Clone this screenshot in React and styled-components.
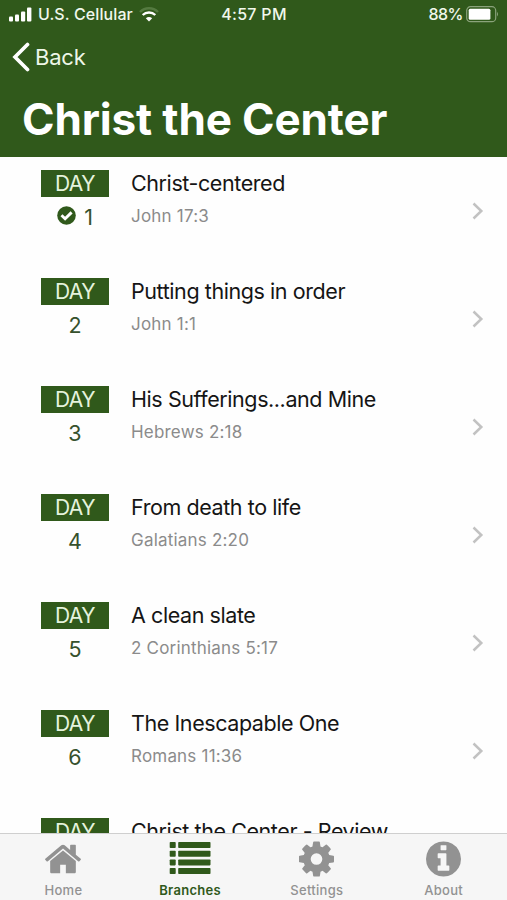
import React, { useState } from "react";
import styled, { createGlobalStyle } from "styled-components";

const GlobalStyle = createGlobalStyle`
  body {
    margin: 0;
    background: #fefefe;
    font-family: Inter, "Liberation Sans", sans-serif;
    font-feature-settings: "calt" 0;
  }
`;

const Screen = styled.div`
  display: flex;
  flex-direction: column;
  height: 100vh;
  overflow: hidden;
`;

// Green header with the status bar, back link and title
const Header = styled.header`
  flex: none;
  box-sizing: border-box;
  height: 157px;
  background-color: #30591b;
  color: #fff;
`;

const StatusBar = styled.div`
  display: grid;
  grid-template-columns: 1fr auto 1fr;
  align-items: center;
  height: 28px;
  padding: 0 8px 0 9px;
  font-size: 16px;
  font-weight: 500;
  letter-spacing: 0.3px;
  color: #f1f8ec;
`;

const StatusGroup = styled.div`
  display: flex;
  align-items: center;
  justify-content: ${(props) => (props.$end ? "flex-end" : "flex-start")};
  gap: ${(props) => (props.$end ? "3px" : "6px")};
  letter-spacing: ${(props) => (props.$end ? "-0.5px" : "0.1px")};
  white-space: nowrap;
`;

const BackButton = styled.button`
  display: flex;
  align-items: center;
  gap: 5px;
  height: 58px;
  padding: 0 0 0 12px;
  border: none;
  background: none;
  font-family: inherit;
  font-size: 22px;
  letter-spacing: -0.2px;
  color: #eef7e8;
`;

const Title = styled.h1`
  margin: 6px 0 0 22px;
  font-size: 44px;
  font-weight: 700;
  line-height: 54px;
  letter-spacing: -0.13px;
  white-space: nowrap;
`;

const List = styled.ul`
  flex: 1;
  min-height: 0;
  margin: 0;
  padding: 0;
  overflow: hidden;
  list-style: none;
`;

const Row = styled.li`
  display: flex;
  box-sizing: border-box;
  height: 107.95px;
  padding: 13.3px 23px 0 41px;
`;

const DayColumn = styled.div`
  width: 68px;
  margin-right: 22px;
  color: #30591b;
`;

const DayLabel = styled.div`
  height: 27px;
  background-color: #30591b;
  font-size: 21px;
  line-height: 27px;
  letter-spacing: -0.5px;
  text-align: center;
  color: #e5f3dd;
`;

const DayNumber = styled.div`
  display: flex;
  align-items: center;
  justify-content: center;
  gap: 8px;
  height: 28px;
  margin-top: 6px;
  font-size: 21.5px;
  color: #36512d;

  svg {
    margin-bottom: 3px;
  }
`;

const Details = styled.div`
  flex: 1;
`;

const Name = styled.div`
  font-size: 21.5px;
  line-height: 27px;
  letter-spacing: -0.42px;
  white-space: nowrap;
  color: #151515;
`;

const Passage = styled.div`
  margin-top: 8px;
  font-size: 17px;
  line-height: 22px;
  letter-spacing: 0.2px;
  color: #8b8b8b;
`;

const Chevron = styled.svg`
  margin-top: 32px;
`;

const TabBar = styled.nav`
  flex: none;
  display: grid;
  grid-template-columns: repeat(4, 1fr);
  box-sizing: border-box;
  height: 67px;
  border-top: 1px solid #cfcfcf;
  background-color: #f6f6f6;
`;

const Tab = styled.button`
  display: flex;
  flex-direction: column;
  align-items: center;
  padding: 7px 0 0;
  border: none;
  background: none;
  font-family: inherit;
  font-size: 13px;
  font-weight: ${(props) => (props.$active ? 600 : 500)};
  line-height: 16px;
  letter-spacing: 0.3px;
  color: ${(props) => (props.$active ? "#30591b" : "#929292")};

  svg {
    display: block;
    height: 36px;
    margin-bottom: 5px;
    fill: currentColor;
  }
`;

const days = [
  { name: "Christ-centered", passage: "John 17:3", done: true },
  { name: "Putting things in order", passage: "John 1:1" },
  { name: "His Sufferings...and Mine", passage: "Hebrews 2:18" },
  { name: "From death to life", passage: "Galatians 2:20" },
  { name: "A clean slate", passage: "2 Corinthians 5:17" },
  { name: "The Inescapable One", passage: "Romans 11:36" },
  { name: "Christ the Center - Review" },
];

const HomeIcon = () => (
  <svg width="36" viewBox="88 84 1616 1616">
    <path d="M1472 992v480q0 26-19 45t-45 19h-384v-384h-256v384h-384q-26 0-45-19t-19-45v-480q0-1 .5-3t.5-3l575-474 575 474q1 2 1 6zm223-69l-62 74q-8 9-21 11h-3q-13 0-21-7l-692-577-692 577q-12 8-24 7-13-2-21-11l-62-74q-8-10-7-23.5t11-21.5l719-599q32-26 76-26t76 26l244 204v-195q0-14 9-23t23-9h192q14 0 23 9t9 23v408l219 182q10 8 11 21.5t-7 23.5z" />
  </svg>
);

const ListIcon = () => (
  <svg width="42" viewBox="0 0 42 36">
    {[1, 9.8, 18.4, 27].map((y) => (
      <g key={y}>
        <rect x="0.7" y={y} width="6" height="6" rx="0.8" />
        <rect x="9.2" y={y} width="32.3" height="6" rx="0.8" />
      </g>
    ))}
  </svg>
);

const SettingsIcon = () => (
  <svg width="35" viewBox="0 105 1536 1580">
    <path d="M1024 896q0-106-75-181t-181-75-181 75-75 181 75 181 181 75 181-75 75-181zm512-109v222q0 12-8 23t-20 13l-185 28q-19 54-39 91 35 50 107 138 10 12 10 25t-9 23q-27 37-99 108t-94 71q-12 0-26-9l-138-108q-44 23-91 38-16 136-29 186-7 28-36 28h-222q-14 0-24.5-8.5t-11.5-21.5l-28-184q-49-16-90-37l-141 107q-10 9-25 9-14 0-25-11-126-114-165-168-7-10-7-23 0-12 8-23 15-21 51-66.5t54-70.5q-27-50-41-99l-183-27q-13-2-21-12.5t-8-23.5v-222q0-12 8-23t19-13l186-28q14-46 39-92-40-57-107-138-10-12-10-24 0-10 9-23 26-36 98.5-107.5t94.5-71.5q13 0 26 10l138 107q44-23 91-38 16-136 29-186 7-28 36-28h222q14 0 24.5 8.5t11.5 21.5l28 184q49 16 90 37l142-107q9-9 24-9 13 0 25 10 129 119 165 170 7 8 7 22 0 12-8 23-15 21-51 66.5t-54 70.5q26 50 41 98l183 28q13 2 21 12.5t8 23.5z" />
  </svg>
);

const AboutIcon = () => (
  <svg width="35" viewBox="128 105 1536 1580">
    <path d="M1152 1376v-160q0-14-9-23t-23-9h-96v-512q0-14-9-23t-23-9h-320q-14 0-23 9t-9 23v160q0 14 9 23t23 9h96v320h-96q-14 0-23 9t-9 23v160q0 14 9 23t23 9h448q14 0 23-9t9-23zm-128-896v-160q0-14-9-23t-23-9h-192q-14 0-23 9t-9 23v160q0 14 9 23t23 9h192q14 0 23-9t9-23zm640 416q0 209-103 385.5t-279.5 279.5-385.5 103-385.5-103-279.5-279.5-103-385.5 103-385.5 279.5-279.5 385.5-103 385.5 103 279.5 279.5 103 385.5z" />
  </svg>
);

const CheckIcon = () => (
  <svg width="19" height="19" viewBox="0 0 19 19">
    <circle cx="9.5" cy="9.5" r="9.3" fill="#30591b" />
    <path d="M4.5 9.3 L8.1 12.8 L14.6 6.4" fill="none" stroke="#fff" strokeWidth="2.9" />
  </svg>
);

const SignalIcon = () => (
  <svg width="23" height="15" viewBox="0 0 23 15" fill="#fff">
    <rect x="0" y="9.5" width="4" height="5" rx="1" />
    <rect x="6" y="7.5" width="4" height="7" rx="1" />
    <rect x="12" y="4.5" width="4.2" height="10" rx="1" />
    <rect x="18" y="0.5" width="4.4" height="14" rx="1" />
  </svg>
);

const WifiIcon = () => (
  <svg width="20" height="15" viewBox="0 0 20 15" fill="none" strokeWidth="2.4">
    <path d="M1 5 A12.8 12.8 0 0 1 19 5" stroke="#547a40" />
    <path d="M3.7 8 A9 9 0 0 1 16.3 8" stroke="#fff" />
    <path d="M6.8 11.2 Q10 8.9 13.2 11.2 L10 14.5 Z" fill="#fff" />
  </svg>
);

const BatteryIcon = () => (
  <svg width="33" height="17" viewBox="0 0 33 17">
    <rect x="0.7" y="0.7" width="29" height="15" rx="3.8" fill="none" stroke="#8ba37c" strokeWidth="1.2" />
    <rect x="2.7" y="2.7" width="21.7" height="11" rx="1.5" fill="#fff" />
    <path d="M31 5.8 Q33 8.2 31 10.6 Z" fill="#8ba37c" />
  </svg>
);

const tabs = [
  { name: "Home", icon: HomeIcon },
  { name: "Branches", icon: ListIcon },
  { name: "Settings", icon: SettingsIcon },
  { name: "About", icon: AboutIcon },
];

const App = () => {
  const [activeTab, setActiveTab] = useState("Branches");

  return (
    <Screen>
      <GlobalStyle />
      <Header>
        <StatusBar>
          <StatusGroup>
            <SignalIcon />
            <span>U.S. Cellular</span>
            <WifiIcon />
          </StatusGroup>
          <span>4:57 PM</span>
          <StatusGroup $end>
            <span>88%</span>
            <BatteryIcon />
          </StatusGroup>
        </StatusBar>
        <BackButton>
          <svg width="18" height="30" viewBox="0 0 18 30">
            <path d="M15.5 2.5 L3 15 L15.5 27.5" fill="none" stroke="#fff" strokeWidth="3.7" strokeLinecap="round" />
          </svg>
          Back
        </BackButton>
        <Title>Christ the Center</Title>
      </Header>

      {/* Day list, the last row runs under the tab bar */}
      <List>
        {days.map((day, index) => (
          <Row key={day.name}>
            <DayColumn>
              <DayLabel>DAY</DayLabel>
              <DayNumber>
                {day.done && <CheckIcon />}
                {index + 1}
              </DayNumber>
            </DayColumn>
            <Details>
              <Name>{day.name}</Name>
              {day.passage && <Passage>{day.passage}</Passage>}
            </Details>
            <Chevron width="12" height="18" viewBox="0 0 12 18">
              <path d="M1.5 1.5 L9.3 9 L1.5 16.5" fill="none" stroke="#c2c2c2" strokeWidth="2.5" />
            </Chevron>
          </Row>
        ))}
      </List>

      <TabBar>
        {tabs.map(({ name, icon: Icon }) => (
          <Tab key={name} $active={name === activeTab} onClick={() => setActiveTab(name)}>
            <Icon />
            {name}
          </Tab>
        ))}
      </TabBar>
    </Screen>
  );
};

export default App;
